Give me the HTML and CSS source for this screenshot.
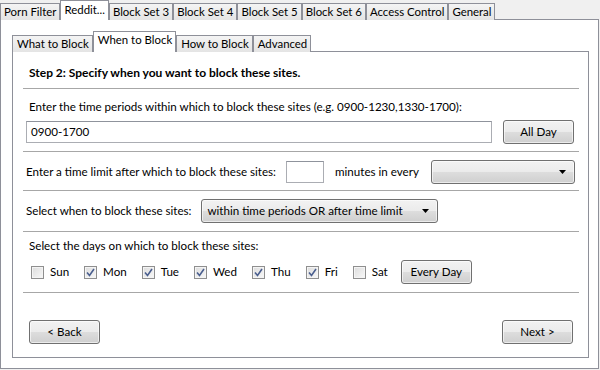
FILE: index.html
```html
<!DOCTYPE html>
<html lang="en">
  <head>
    <meta charset="UTF-8" />
    <title>When to Block</title>
    <link rel="stylesheet" href="styles.css">
  </head>
  <body>
    <div class="tabbar outer-tabs">
      <div class="tab">Porn Filter</div>
      <div class="tab active">Reddit...</div>
      <div class="tab">Block Set 3</div>
      <div class="tab">Block Set 4</div>
      <div class="tab">Block Set 5</div>
      <div class="tab">Block Set 6</div>
      <div class="tab">Access Control</div>
      <div class="tab">General</div>
    </div>

    <div class="panel outer-panel">
      <div class="tabbar inner-tabs">
        <div class="tab">What to Block</div>
        <div class="tab active">When to Block</div>
        <div class="tab">How to Block</div>
        <div class="tab">Advanced</div>
      </div>

      <div class="panel inner-panel">
        <div class="step">Step 2: Specify when you want to block these sites.</div>
        <div class="sep"></div>

        <div class="section periods">
          <div class="label">Enter the time periods within which to block these sites (e.g. 0900-1230,1330-1700):</div>
          <div class="row">
            <div class="textbox wide">0900-1700</div>
            <div class="btn">All Day</div>
          </div>
        </div>
        <div class="sep"></div>

        <div class="section limit">
          <div class="row">
            <div class="label">Enter a time limit after which to block these sites:</div>
            <div class="textbox small"></div>
            <div class="label minutes">minutes in every</div>
            <div class="combo every">
              <span class="combo-text"></span>
              <svg class="arrow" width="7" height="4" viewBox="0 0 7 4"><path d="M0 0h7L3.5 4z" fill="#000"/></svg>
            </div>
          </div>
        </div>
        <div class="sep"></div>

        <div class="section mode">
          <div class="row">
            <div class="label">Select when to block these sites:</div>
            <div class="combo when">
              <span class="combo-text">within time periods OR after time limit</span>
              <svg class="arrow" width="7" height="4" viewBox="0 0 7 4"><path d="M0 0h7L3.5 4z" fill="#000"/></svg>
            </div>
          </div>
        </div>
        <div class="sep"></div>

        <div class="section days">
          <div class="label">Select the days on which to block these sites:</div>
          <div class="row day-row">
            <label class="day"><span class="check"></span>Sun</label>
            <label class="day"><span class="check on"><svg width="9" height="9" viewBox="0 0 9 9"><path d="M1 4.5l2.5 3L8 1" fill="none" stroke="#4a5e8e" stroke-width="1.6"/></svg></span>Mon</label>
            <label class="day"><span class="check on"><svg width="9" height="9" viewBox="0 0 9 9"><path d="M1 4.5l2.5 3L8 1" fill="none" stroke="#4a5e8e" stroke-width="1.6"/></svg></span>Tue</label>
            <label class="day"><span class="check on"><svg width="9" height="9" viewBox="0 0 9 9"><path d="M1 4.5l2.5 3L8 1" fill="none" stroke="#4a5e8e" stroke-width="1.6"/></svg></span>Wed</label>
            <label class="day"><span class="check on"><svg width="9" height="9" viewBox="0 0 9 9"><path d="M1 4.5l2.5 3L8 1" fill="none" stroke="#4a5e8e" stroke-width="1.6"/></svg></span>Thu</label>
            <label class="day"><span class="check on"><svg width="9" height="9" viewBox="0 0 9 9"><path d="M1 4.5l2.5 3L8 1" fill="none" stroke="#4a5e8e" stroke-width="1.6"/></svg></span>Fri</label>
            <label class="day"><span class="check"></span>Sat</label>
            <div class="btn">Every Day</div>
          </div>
        </div>
        <div class="sep"></div>

        <div class="footer">
          <div class="btn">&lt; Back</div>
          <div class="btn">Next &gt;</div>
        </div>
      </div>
    </div>
  </body>
</html>
```

FILE: styles.css
```css
* {
  margin: 0;
  padding: 0;
  box-sizing: border-box;
}

body {
  width: 600px;
  height: 370px;
  overflow: hidden;
  background: #f0f0f0;
  font-family: "Lato", "Noto Sans", sans-serif;
  font-size: 11.6px;
  line-height: 16px;
  color: #000;
}

/* tab strips */
.tabbar {
  display: flex;
  align-items: flex-end;
  height: 20px;
}

.tab {
  height: 17px;
  margin-bottom: -1px;
  padding: 0 3px;
  font-size: 11.4px;
  line-height: 16px;
  white-space: nowrap;
  border: 1px solid #8e9099;
  border-bottom: none;
  background: linear-gradient(#f4f4f4, #e4e4e4);
}

.tab.active {
  height: 20px;
  padding-top: 1px;
  background: #fff;
  position: relative;
  z-index: 1;
}

.outer-tabs {
  height: 19px;
}

.outer-tabs .tab.active {
  height: 20px;
}

/* panels */
.panel {
  border: 1px solid #8e9099;
  background: #fff;
}

.outer-panel {
  width: 599px;
  height: 350px;
  padding: 11px 9px 10px 11px;
}

.inner-tabs {
  height: 20px;
}

.inner-tabs .tab {
  padding: 0 3px 0 4px;
}

.inner-tabs .tab.active {
  height: 21px;
}

.inner-panel {
  height: 307px;
  padding: 0 9px 0 10px;
  display: flex;
  flex-direction: column;
}

.step {
  font-weight: bold;
  font-size: 12px;
  padding: 13px 0 7px 6px;
}

.sep {
  height: 1px;
  background: #a7a7a7;
}

.section {
  padding-left: 3px;
}

.label {
  padding-left: 3px;
  white-space: nowrap;
}

.row {
  display: flex;
  align-items: center;
  height: 24px;
}

.periods {
  padding-top: 10px;
  padding-bottom: 7px;
}

.periods .row {
  margin-top: 5px;
  gap: 11px;
}

.limit {
  padding: 8px 0 6px;
}

.mode {
  padding: 8px 0 8px;
}

.days {
  padding-top: 6px;
  padding-bottom: 8px;
}

.days .row {
  margin-top: 6px;
}

/* controls */
.textbox {
  height: 22px;
  border: 1px solid #abadb3;
  border-top-color: #8f939c;
  background: #fff;
  padding: 2px 0 0 4px;
}

.textbox.wide {
  width: 466px;
}

.textbox.small {
  width: 38px;
  margin-left: 10px;
}

.minutes {
  margin-left: 8px;
}

.btn {
  width: 71px;
  height: 24px;
  line-height: 22px;
  text-align: center;
  border: 1px solid #707070;
  border-radius: 3px;
  background: linear-gradient(#f2f2f2 0%, #ebebeb 50%, #dddddd 51%, #cfcfcf 100%);
  box-shadow: inset 0 0 0 1px rgba(255, 255, 255, 0.6);
}

.combo {
  height: 24px;
  display: flex;
  align-items: center;
  justify-content: space-between;
  padding: 0 8px 0 5px;
  border: 1px solid #707070;
  border-radius: 3px;
  background: linear-gradient(#f2f2f2 0%, #ebebeb 50%, #dddddd 51%, #cfcfcf 100%);
  box-shadow: inset 0 0 0 1px rgba(255, 255, 255, 0.6);
}

.combo.every {
  width: 144px;
  margin-left: 12px;
}

.combo.when {
  width: 237px;
  margin-left: 10px;
}

.day-row {
  padding-left: 5px;
}

.day {
  display: flex;
  align-items: center;
  margin-right: 15px;
}

.day:nth-last-child(2) {
  margin-right: 13px;
}

.check {
  width: 13px;
  height: 13px;
  margin-right: 6px;
  border: 1px solid #8f8f8f;
  background: linear-gradient(135deg, #dcdcdc, #f8f8f8);
  box-shadow: inset 0 0 0 1px #f4f4f4;
  display: flex;
  align-items: center;
  justify-content: center;
}

.footer {
  flex: 1;
  display: flex;
  justify-content: space-between;
  padding: 27px 6px 0 6px;
}
```
